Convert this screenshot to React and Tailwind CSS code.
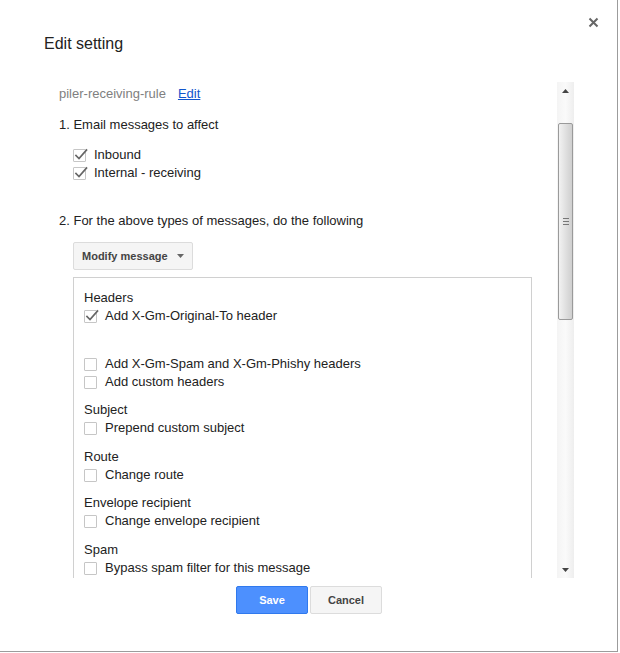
import React from 'react'

const font = { fontFamily: '"Liberation Sans", Arial, sans-serif' }

function Check({ checked }) {
  return (
    <span className="relative inline-block w-[13px] h-[13px] shrink-0 border border-[#c6c6c6] bg-white rounded-[1px]">
      {checked && (
        <svg className="absolute -top-[3px] -left-[1px]" width="16" height="16" viewBox="0 0 16 16" fill="none">
          <path d="M3 8.5l3 3L13.5 3" stroke="#666" strokeWidth="1.7" strokeLinecap="square" />
        </svg>
      )}
    </span>
  )
}

function Row({ checked, children }) {
  return (
    <label className="flex items-center h-[18px] gap-[8px]">
      <Check checked={checked} />
      <span>{children}</span>
    </label>
  )
}

function Group({ title, className = '', children }) {
  return (
    <div className={className}>
      <div className="h-[18px] leading-[18px]">{title}</div>
      {children}
    </div>
  )
}

function Scrollbar() {
  return (
    <div className="w-[17px] h-full flex flex-col bg-gradient-to-r from-[#f4f4f4] via-[#fafafa] to-[#eeeeee]">
      <div className="h-[17px] flex items-center justify-center">
        <svg width="7" height="4" viewBox="0 0 7 4"><path d="M0 4L3.5 0L7 4z" fill="#444" /></svg>
      </div>
      <div className="flex-1 relative">
        <div className="absolute left-[1px] right-[1px] top-[24px] h-[197px] border border-[#9a9a9a] rounded-[2px] bg-gradient-to-r from-[#f2f2f2] to-[#cfcfcf] flex items-center justify-center">
          <div className="flex flex-col gap-[2px]">
            <div className="w-[6px] h-px bg-[#777]" />
            <div className="w-[6px] h-px bg-[#777]" />
            <div className="w-[6px] h-px bg-[#777]" />
          </div>
        </div>
      </div>
      <div className="h-[17px] flex items-center justify-center">
        <svg width="7" height="4" viewBox="0 0 7 4"><path d="M0 0L3.5 4L7 0z" fill="#444" /></svg>
      </div>
    </div>
  )
}

export default function App() {
  return (
    <div className="w-[620px] h-[653px] bg-white overflow-hidden" style={font}>
      <div className="relative w-[618px] h-[652px] border-r border-b border-[#9c9c9c] flex flex-col text-[13px] text-[#222]">
        {/* Close */}
        <button className="absolute top-[17px] right-[18px] w-[11px] h-[11px]">
          <svg width="11" height="11" viewBox="0 0 11 11">
            <path d="M1.5 1.5l8 8M9.5 1.5l-8 8" stroke="#666" strokeWidth="2" />
          </svg>
        </button>

        {/* Title */}
        <h1 className="pt-[34px] pl-[44px] h-[82px] text-[16px] leading-[20px] text-[#222]">Edit setting</h1>

        {/* Body */}
        <div className="flex h-[496px]">
          <div className="w-[557px] overflow-hidden pl-[59px] pt-[3px] leading-[18px]">
            <div className="h-[18px]">
              <span className="text-[#808080]">piler-receiving-rule</span>
              <a className="ml-[12px] text-[#15c] underline">Edit</a>
            </div>

            <div className="mt-[13px] h-[18px]">1. Email messages to affect</div>
            <div className="mt-[12px] pl-[14px]">
              <Row checked>Inbound</Row>
              <Row checked>Internal - receiving</Row>
            </div>

            <div className="mt-[30px] h-[18px]">2. For the above types of messages, do the following</div>

            <div className="mt-[12px] pl-[14px]">
              <button className="h-[28px] pl-[8px] pr-[8px] flex items-center gap-[9px] bg-[#f5f5f5] border border-[#dcdcdc] rounded-[2px] text-[11px] font-bold text-[#444]">
                Modify message
                <svg width="7" height="4" viewBox="0 0 7 4"><path d="M0 0L3.5 4L7 0z" fill="#666" /></svg>
              </button>

              <div className="mt-[7px] w-[459px] border-t border-l border-r border-[#d0d0d0] pl-[10px] pt-[11px] pb-[30px]">
                <Group title="Headers">
                  <Row checked>Add X-Gm-Original-To header</Row>
                  <div className="h-[30px]" />
                  <Row>Add X-Gm-Spam and X-Gm-Phishy headers</Row>
                  <Row>Add custom headers</Row>
                </Group>
                <Group title="Subject" className="mt-[10px]">
                  <Row>Prepend custom subject</Row>
                </Group>
                <Group title="Route" className="mt-[11px]">
                  <Row>Change route</Row>
                </Group>
                <Group title="Envelope recipient" className="mt-[10px]">
                  <Row>Change envelope recipient</Row>
                </Group>
                <Group title="Spam" className="mt-[11px]">
                  <Row>Bypass spam filter for this message</Row>
                </Group>
              </div>
            </div>
          </div>
          <Scrollbar />
        </div>

        {/* Footer */}
        <div className="pt-[8px] pl-[236px] flex gap-[2px]">
          <button className="w-[72px] h-[28px] rounded-[2px] bg-[#4d90fe] border border-[#3079ed] text-white text-[11px] font-bold">
            Save
          </button>
          <button className="w-[72px] h-[28px] rounded-[2px] bg-[#f5f5f5] border border-[#dcdcdc] text-[#444] text-[11px] font-bold">
            Cancel
          </button>
        </div>
      </div>
    </div>
  )
}
